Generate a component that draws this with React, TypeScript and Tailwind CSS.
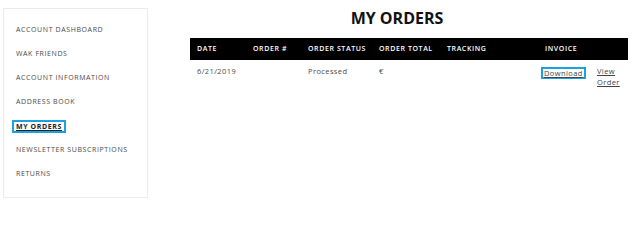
import React from "react";

const MENU = [
  "ACCOUNT DASHBOARD",
  "WAK FRIENDS",
  "ACCOUNT INFORMATION",
  "ADDRESS BOOK",
  "MY ORDERS",
  "NEWSLETTER SUBSCRIPTIONS",
  "RETURNS",
];

const COLUMNS = ["DATE", "ORDER #", "ORDER STATUS", "ORDER TOTAL", "TRACKING", "INVOICE", ""];

const ORDERS = [{ date: "6/21/2019", number: "", status: "Processed", total: "€", tracking: "" }];

const GRID = "grid grid-cols-[56px_55px_71px_68px_98px_52px_38px]";

export default function App() {
  return (
    <div className="min-h-[215px] w-[640px] bg-white font-['Open_Sans',sans-serif] flex items-start pl-[3px] pt-[8px]">
      {/* Account nav */}
      <div className="w-[145px] border border-[#ebebeb] pt-[9px] pb-[11px] pl-[12px]">
        {MENU.map((item) =>
          item === "MY ORDERS" ? (
            <div key={item} className="h-[24px] flex items-center">
              <span className="-ml-[4px] inline-block border-2 border-[#1ba1e2] px-[2px] text-[7px] leading-[9px] tracking-[0.6px] font-bold text-[#222] underline">
                {item}
              </span>
            </div>
          ) : (
            <div key={item} className="h-[24px] flex items-center text-[7px] tracking-[0.6px] text-[#4a4a4a]">
              {item}
            </div>
          )
        )}
      </div>

      {/* Orders */}
      <div className="ml-[18px] w-[462px]">
        <h1 className="pt-[2px] text-center text-[16px] leading-[17px] font-bold text-[#111]">MY ORDERS</h1>
        <div className="ml-[24px] mt-[11px] w-[438px]">
          <div className={`${GRID} h-[22px] items-center bg-black text-white text-[7px] font-semibold tracking-[0.6px]`}>
            {COLUMNS.map((c, i) => (
              <div key={i} className="pl-[7px] whitespace-nowrap">
                {c}
              </div>
            ))}
          </div>
          {ORDERS.map((o) => (
            <div key={o.date} className={`${GRID} pt-[6px] text-[7.5px] leading-[11px] tracking-[0.4px] text-[#4a4a4a]`}>
              <div className="pl-[7px]">{o.date}</div>
              <div className="pl-[7px]">{o.number}</div>
              <div className="pl-[7px]">{o.status}</div>
              <div className="pl-[7px]">{o.total}</div>
              <div className="pl-[7px]">{o.tracking}</div>
              <div className="pl-[3px]">
                <a className="inline-block border-2 border-[#1ba1e2] px-[1px] leading-[8px] mt-[1px] underline text-[#444]">
                  Download
                </a>
              </div>
              <div className="pl-[7px] leading-[10.7px]">
                <a className="underline text-[#444]">View Order</a>
              </div>
            </div>
          ))}
        </div>
      </div>
    </div>
  );
}
